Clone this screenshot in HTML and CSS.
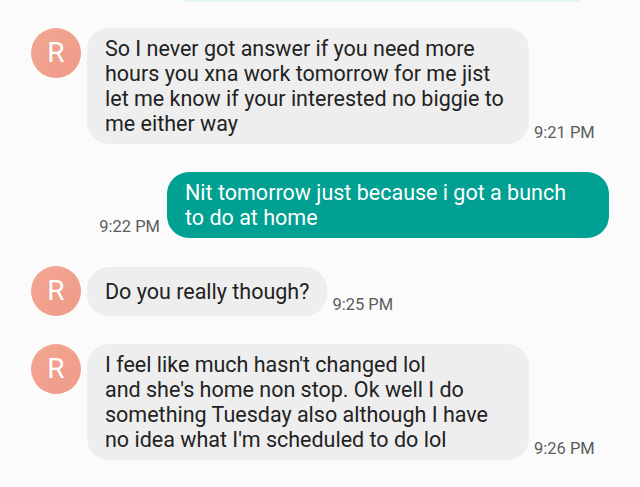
FILE: index.html
```html
<!DOCTYPE html>
<html>
<head>
  <title>Messages</title>
  <link rel="stylesheet" href="styles.css">
</head>
<body>
  <div class="thread">
    <div class="prev-edge"></div>

    <div class="msg in">
      <div class="avatar">R</div>
      <div class="bubble">So I never got answer if you need more hours you xna work tomorrow for me jist let me know if your interested no biggie to me either way</div>
      <span class="time">9:21 PM</span>
    </div>

    <div class="msg out">
      <span class="time">9:22 PM</span>
      <div class="bubble">Nit tomorrow just because i got a bunch to do at home</div>
    </div>

    <div class="msg in">
      <div class="avatar">R</div>
      <div class="bubble single">Do you really though?</div>
      <span class="time">9:25 PM</span>
    </div>

    <div class="msg in">
      <div class="avatar">R</div>
      <div class="bubble">I feel like much hasn't changed lol<br>and she's home non stop. Ok well I do something Tuesday also although I have no idea what I'm scheduled to do lol</div>
      <span class="time">9:26 PM</span>
    </div>
  </div>
</body>
</html>
```

FILE: styles.css
```css
body {
  margin: 0;
  background-color: #fbfbfb;
  font-family: Roboto, "Liberation Sans", sans-serif;
}

.thread {
  display: flex;
  flex-direction: column;
  gap: 28px;
  padding: 0 31px;
}

.prev-edge {
  height: 2px;
  margin: 0 29px 0 152px;
  background-color: #e4f7f6;
  border-radius: 0 0 10px 10px;
  margin-bottom: -2px;
}

.msg {
  display: flex;
  align-items: flex-end;
}

.msg.out {
  justify-content: flex-end;
}

.avatar {
  align-self: flex-start;
  flex: none;
  width: 50px;
  height: 50px;
  border-radius: 50%;
  background: linear-gradient(135deg, #f3a793, #ef9a88);
  color: #fff;
  font-size: 28px;
  line-height: 50px;
  text-align: center;
  margin-right: 6px;
}

.bubble {
  box-sizing: border-box;
  min-height: 49px;
  padding: 8px 22px 8px 18px;
  border-radius: 22px;
  background-color: #eeeeee;
  color: #222;
  font-size: 21.5px;
  line-height: 25px;
  display: flex;
  align-items: center;
}

.bubble.single {
  padding-right: 18px;
}

.msg.in .bubble {
  max-width: 442px;
}

.msg.out .bubble {
  width: 442px;
  background-color: #00a092;
  color: #fff;
}

.time {
  flex: none;
  font-size: 16.5px;
  color: #5c5c5c;
  line-height: 18px;
  margin-bottom: 2px;
}

.msg.in .time {
  margin-left: 5px;
}

.msg.out .time {
  margin-right: 7px;
}
```
